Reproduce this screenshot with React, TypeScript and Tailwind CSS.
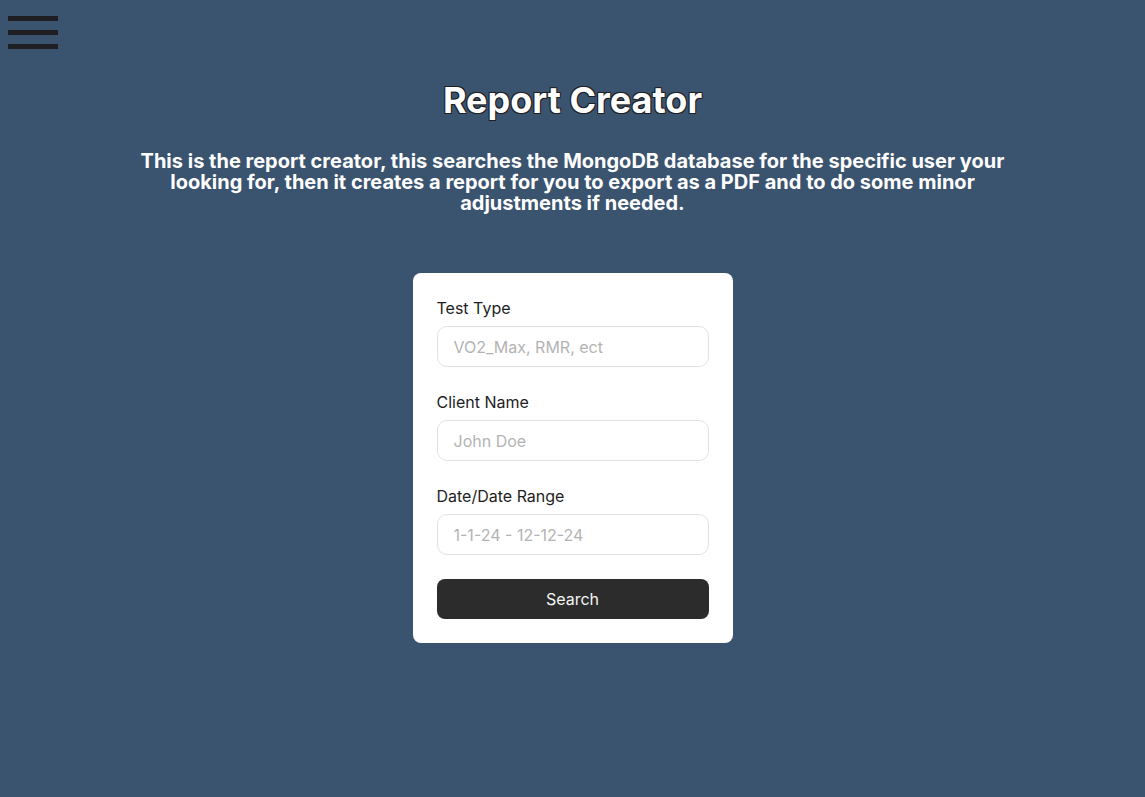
import React from 'react';

const fields = [
  { label: 'Test Type', placeholder: 'VO2_Max, RMR, ect' },
  { label: 'Client Name', placeholder: 'John Doe' },
  { label: 'Date/Date Range', placeholder: '1-1-24 - 12-12-24' },
];

const App = () => {
  return (
    <div className="min-h-screen bg-[#3a536e] font-['Inter','Liberation_Sans',sans-serif] relative">
      <button className="absolute left-2 top-[16px] flex flex-col gap-[9px]" aria-label="menu">
        <span className="block w-[50px] h-[5px] bg-[#1e1e23]" />
        <span className="block w-[50px] h-[5px] bg-[#1e1e23]" />
        <span className="block w-[50px] h-[5px] bg-[#1e1e23]" />
      </button>

      <main className="flex flex-col items-center pt-[76px]">
        <h1
          className="text-[36px] leading-[48px] font-bold text-white"
          style={{ textShadow: '-1px -1px 0 #1e1e23, 1px -1px 0 #1e1e23, -1px 1px 0 #1e1e23, 1px 1px 0 #1e1e23' }}
        >
          Report Creator
        </h1>
        <p className="mt-[27px] w-[880px] text-center text-[20px] leading-[21px] font-bold text-white">
          This is the report creator, this searches the MongoDB database for the specific user your looking for, then it
          creates a report for you to export as a PDF and to do some minor adjustments if needed.
        </p>

        <div className="mt-[59px] w-[320px] bg-white rounded-lg p-6 flex flex-col gap-6">
          {fields.map((f) => (
            <label key={f.label} className="flex flex-col gap-[7px]">
              <span className="text-[16px] leading-[22px] text-[#1e1e1e]">{f.label}</span>
              <input
                placeholder={f.placeholder}
                className="h-[41px] w-full rounded-[10px] border border-[#e2e2e2] px-4 text-[16px] text-[#1e1e1e] placeholder:text-[#b3b3b3] outline-none"
              />
            </label>
          ))}
          <button className="h-10 w-full rounded-lg bg-[#2c2c2c] text-[16px] text-[#f5f5f5]">Search</button>
        </div>
      </main>
    </div>
  );
};

export default App;
